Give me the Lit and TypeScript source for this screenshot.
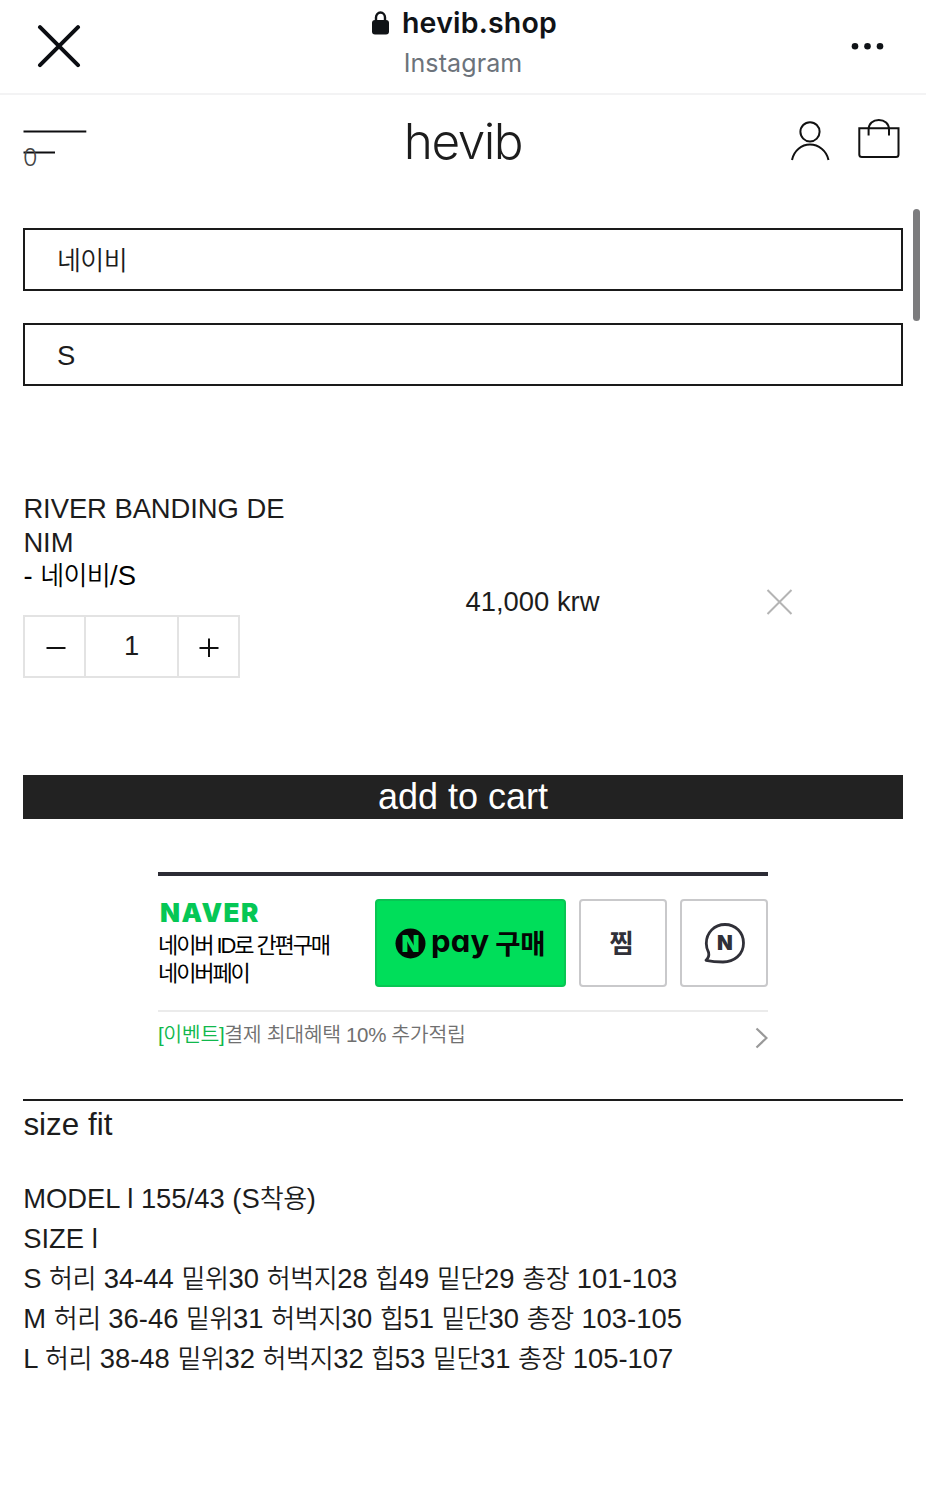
import { LitElement, html, css } from "lit";
import { customElement, state } from "lit/decorators.js";

const hangul = /([\uac00-\ud7a3]+)/;

/** Wraps each run of Hangul so that it can carry its own weight and tracking. */
const mixed = (text: string) =>
  text.split(hangul).map((part, i) => (i % 2 ? html`<span class="ko">${part}</span>` : part));

@customElement("browser-bar")
class BrowserBar extends LitElement {
  static styles = css`
    :host { display: grid; grid-template-columns: 200px 1fr 200px; height: 93px; border-bottom: 2px solid #f3f3f4; box-sizing: content-box; font-family: Inter, sans-serif; }
    .left { padding: 24px 0 0 37px; }
    .right { padding: 42px 42px 0 0; }
    svg { display: block; }
    .right svg { margin-left: auto; }
    .mid { display: flex; flex-direction: column; align-items: center; }
    .site { display: flex; align-items: center; gap: 13px; height: 34px; margin-top: 6px; padding-left: 3px; font-size: 28.5px; font-weight: 600; line-height: 36px; color: #101317; letter-spacing: 0.2px; white-space: nowrap; }
    .site svg { margin-top: -1px; }
    .app { font-size: 25px; line-height: 30px; margin-top: 8px; color: #6c737b; letter-spacing: 0.1px; }
  `;
  render() {
    return html`
      <div class="left">
        <svg width="44" height="44" viewBox="0 0 44 44"><path d="M3 3.2 41 41.2M41 3.2 3 41.2" stroke="#0b0d12" stroke-width="4" stroke-linecap="round" /></svg>
      </div>
      <div class="mid">
        <div class="site">
          <svg width="17" height="24" viewBox="0 0 17 24">
            <path d="M4 11V6.5a4.5 5 0 0 1 9 0V11" fill="none" stroke="#101317" stroke-width="2.4" />
            <rect y="9" width="17" height="14.500" rx="3" fill="#101317" />
          </svg>
          <span>hevib.shop</span>
        </div>
        <div class="app">Instagram</div>
      </div>
      <div class="right">
        <svg width="33" height="8" viewBox="0 0 33 8" fill="#101317"><circle cx="4" cy="4.2" r="3.3" /><circle cx="16.500" cy="4.2" r="3.3" /><circle cx="29" cy="4.2" r="3.3" /></svg>
      </div>
    `;
  }
}

@customElement("shop-header")
class ShopHeader extends LitElement {
  static styles = css`
    :host { display: grid; grid-template-columns: 200px 1fr 200px; height: 133px; }
    .menu { position: relative; padding: 35px 0 0 23px; }
    svg { display: block; }
    .count { position: absolute; left: 23px; top: 49px; font: 350 23.5px/28px Inter, sans-serif; color: #444; }
    .logo { text-align: center; font: 320 49.5px/60px Inter, sans-serif; letter-spacing: -1.5px; color: #1c1c1c; padding-top: 16px; }
    .tools { display: flex; justify-content: flex-end; gap: 28px; padding: 24px 26px 0 0; }
  `;
  render() {
    return html`
      <div class="menu">
        <svg width="64" height="26" viewBox="0 0 64 26"><path d="M.5 1.5H63.3M.5 22.5H32" stroke="#0e0e10" stroke-width="2" /></svg>
        <span class="count">0</span>
      </div>
      <div class="logo">hevib</div>
      <div class="tools">
        <svg width="40" height="42" viewBox="0 0 40 42" fill="none" stroke="#111" stroke-width="2">
          <circle cx="20" cy="12.800" r="9.600" /><path d="M2 41C4 31.500 11.500 25.600 20 25.600S36.500 31.500 38.500 41" />
        </svg>
        <svg width="42" height="42" viewBox="0 0 42 42" fill="none" stroke="#111" stroke-width="2">
          <path d="M1.300 9.300H40.500V35.500Q40.500 38 38 38H4Q1.300 38 1.300 35.500Z" /><path d="M10.600 16.500V10.500C10.600 4.800 15 1 20.800 1S31 4.800 31 10.500V16.500" />
        </svg>
      </div>
    `;
  }
}

@customElement("order-options")
class OrderOptions extends LitElement {
  @state() private qty = 1;
  static styles = css`
    :host { display: block; padding: 0 23px; font: 27.4px/34px "Liberation Sans", "Noto Sans CJK KR", sans-serif; color: #1c1c1c; }
    .ko { font-family: "Noto Sans CJK KR", sans-serif; font-size: 26px; font-weight: 350; letter-spacing: -0.6px; line-height: 1; }
    svg { display: block; }
    .select { box-sizing: border-box; height: 63px; border: 2px solid #1a1a1a; margin-bottom: 32px; padding: 0 32px; line-height: 62px; }
    .item { display: grid; grid-template-columns: 442.5px 300.5px 1fr; height: 186px; margin-top: 106px; align-items: start; }
    .name { width: 270px; word-break: break-all; line-height: 33.6px; padding-left: 0.4px; letter-spacing: -0.05px; }
    .variant { color: #000; line-height: 33.6px; padding-left: 0.4px; }
    .stepper { box-sizing: border-box; display: grid; grid-template-columns: 60px 1fr 60px; width: 217px; height: 63px; border: 2px solid #e3e3e3; margin-top: 22px; }
    button { all: unset; display: grid; place-items: center; cursor: pointer; }
    .stepper svg { margin: 1px 0 0 2px; }
    .qty { border: solid #e3e3e3; border-width: 0 2px; margin: 0 -1px; text-align: center; line-height: 58px; }
    .price { padding-top: 93px; line-height: 34px; }
    .remove { padding-top: 97px; }
    .cart { display: block; box-sizing: border-box; height: 44px; margin-top: 97px; background: #222; color: #fff; text-align: center; font-size: 36px; line-height: 42px; width: 100%; }
  `;
  render() {
    return html`
      <div class="select">${mixed("네이비")}</div>
      <div class="select">S</div>
      <div class="item">
        <div>
          <div class="name">RIVER BANDING DENIM</div>
          <div class="variant">${mixed("- 네이비/S")}</div>
          <div class="stepper">
            <button @click=${() => (this.qty = Math.max(1, this.qty - 1))}>
              <svg width="20" height="20" viewBox="0 0 20 20"><path d="M.5 11H19.500" stroke="#111" stroke-width="2" /></svg>
            </button>
            <div class="qty">${this.qty}</div>
            <button @click=${() => (this.qty += 1)}>
              <svg width="20" height="20" viewBox="0 0 20 20"><path d="M.5 11H19.500M10 1.500V20" stroke="#111" stroke-width="2" /></svg>
            </button>
          </div>
        </div>
        <div class="price">41,000 krw</div>
        <div class="remove">
          <svg width="27" height="26" viewBox="0 0 27 26"><path d="M1.500 1 25.500 25M25.500 1 1.500 25" stroke="#b4b4b4" stroke-width="2" /></svg>
        </div>
      </div>
      <button class="cart">add to cart</button>
    `;
  }
}

@customElement("naver-pay")
class NaverPay extends LitElement {
  static styles = css`
    :host { display: block; width: 610px; margin: 53px 0 0 158px; border-top: 4px solid #2c2c35; font-family: "Liberation Sans", "Noto Sans CJK KR", sans-serif; }
    svg { display: block; }
    .row { display: flex; height: 88px; margin-top: 23px; }
    .intro { width: 217px; flex: none; white-space: nowrap; font-size: 22px; color: #000; line-height: 27.5px; letter-spacing: -2.1px; }
    .intro .ko { font-weight: 400; }
    .brand { font: 900 26px/28px Inter, sans-serif; color: #06c755; letter-spacing: 1.5px; padding-left: 2px; margin-bottom: 5px; }
    .pay, .box { box-sizing: border-box; height: 88px; border-radius: 4px; display: flex; align-items: center; font-family: "Noto Sans CJK KR", sans-serif; }
    .pay { width: 191px; background: #00de5a; border: 2px solid #08c653; padding-left: 18px; color: #050505; }
    .word { font: 700 31px/36px Inter, sans-serif; font-feature-settings: "cv11"; margin: -5px 0 0 5px; letter-spacing: 0.2px; }
    .buy { font-size: 27.5px; font-weight: 700; letter-spacing: -0.3px; margin: -3px 0 0 6px; line-height: 40px; }
    .box { width: 88px; border: 2px solid #c9c9cb; margin-left: 13px; justify-content: center; font-size: 26px; font-weight: 600; color: #303038; }
    .wish { padding: 0 3px 3px 0; }
    .talk { padding-left: 2px; }
    .event { display: flex; justify-content: space-between; border-top: 2px solid #ebebeb; margin-top: 23px; height: 87px; font-size: 20.5px; line-height: 46px; letter-spacing: -0.35px; color: #707070; }
    .event .ko { font-weight: 350; }
    .tag { color: #10b84c; }
    .event svg { margin-top: 15px; }
    .n { font-family: Inter, sans-serif; font-weight: 900; }
    .ko { font-family: "Noto Sans CJK KR", sans-serif; line-height: 1; }
  `;
  render() {
    return html`
      <div class="row">
        <div class="intro">
          <div class="brand">NAVER</div>
          <div>${mixed("네이버 ID로 간편구매")}</div>
          <div>${mixed("네이버페이")}</div>
        </div>
        <div class="pay">
          <svg width="31" height="31" viewBox="0 0 31 31"><circle cx="15.500" cy="15.500" r="15" fill="#050505" />
            <text class="n" x="15.500" y="24" text-anchor="middle" font-size="23.500" fill="#00de5a">N</text></svg>
          <span class="word">pay</span><span class="buy">구매</span>
        </div>
        <div class="box wish">찜</div>
        <div class="box talk">
          <svg width="42" height="42" viewBox="0 0 42 42">
            <path d="M2 38.300C4.500 36 5.300 33.500 4.600 30.500 3 27.500 2.300 24.500 2.300 21.500 2.300 10.500 10.500 2.500 21 2.500S39.500 10.500 39.500 21C39.500 33 30 39.800 19 40 12.500 40 6.500 39.300 2 38.300Z" fill="none" stroke="#303038" stroke-width="2.800" stroke-linejoin="round" />
            <text class="n" x="21" y="27.800" text-anchor="middle" font-size="20.500" fill="#303038">N</text>
          </svg>
        </div>
      </div>
      <div class="event">
        <div><span class="tag">${mixed("[이벤트]")}</span>${mixed("결제 최대혜택 10% 추가적립")}</div>
        <svg width="13" height="22" viewBox="0 0 13 22"><path d="M1.500 1.500 11.500 11 1.500 20.500" fill="none" stroke="#999" stroke-width="2.200" /></svg>
      </div>
    `;
  }
}

@customElement("size-info")
class SizeInfo extends LitElement {
  static styles = css`
    :host { display: block; margin: 0 23px; border-top: 2px solid #1c1c1c; font: 27.4px/40px "Liberation Sans", "Noto Sans CJK KR", sans-serif; color: #1c1c1c; }
    h2 { margin: 0 0 31px; padding: 1px 0 0 0.4px; font-size: 31.4px; font-weight: 400; line-height: 46px; }
    p { margin: 0; padding-left: 0.2px; height: 40px; white-space: nowrap; }
    .ko { font-family: "Noto Sans CJK KR", sans-serif; font-size: 26px; font-weight: 350; letter-spacing: -0.38px; line-height: 1; }
  `;
  private lines = [
    "MODEL l 155/43 (S착용)",
    "SIZE l",
    "S 허리 34-44 밑위30 허벅지28 힙49 밑단29 총장 101-103",
    "M 허리 36-46 밑위31 허벅지30 힙51 밑단30 총장 103-105",
    "L 허리 38-48 밑위32 허벅지32 힙53 밑단31 총장 105-107",
  ];
  render() {
    return html`<h2>size fit</h2>${this.lines.map((l) => html`<p>${mixed(l)}</p>`)}`;
  }
}

@customElement("app-root")
class AppRoot extends LitElement {
  static styles = css`
    :host { display: block; position: relative; width: 926px; height: 1500px; overflow: hidden; background: #fff; }
    .thumb { position: absolute; right: 6px; top: 209px; width: 7px; height: 112px; border-radius: 4px; background: #7c7c7e; }
  `;
  render() {
    return html`
      <browser-bar></browser-bar>
      <shop-header></shop-header>
      <order-options></order-options>
      <naver-pay></naver-pay>
      <size-info></size-info>
      <div class="thumb"></div>
    `;
  }
}
